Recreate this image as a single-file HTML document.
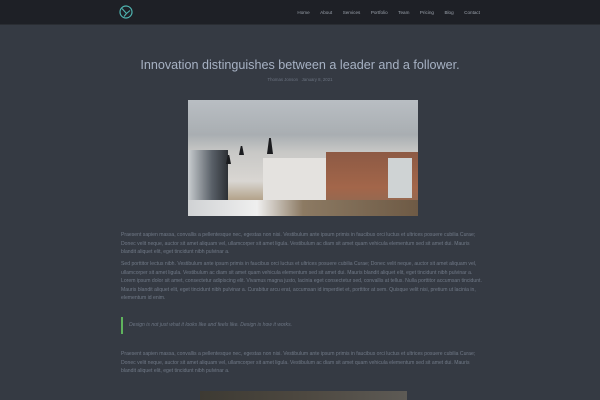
<!DOCTYPE html>
<html><head><meta charset="utf-8"><style>
*{margin:0;padding:0;box-sizing:border-box}
body{width:600px;height:400px;overflow:hidden;background:#353a43;font-family:"Liberation Sans",sans-serif}
.nav{height:25px;background:#1e2026;position:relative;border-bottom:1px solid #2a2d33}
.logo{position:absolute;left:119px;top:5px;width:14px;height:14px}
.menu{position:absolute;right:120px;top:10px;font-size:4.6px;color:#9aa1ab;display:flex;gap:10.5px}
h1{position:absolute;top:58px;left:0;width:600px;text-align:center;font-weight:normal;font-size:12.6px;color:#a7b2c4}
.meta{position:absolute;top:77px;width:600px;text-align:center;font-size:4.3px;color:#6b7380}
.img{position:absolute;left:188px;top:100px;width:230px;height:116px;overflow:hidden;
background:linear-gradient(180deg,#b9bec3 0%,#a9aeb2 30%,#c8c8c6 45%,#d9d6d2 70%,#b6a68f 85%,#8b7660 100%)}
.wall{position:absolute;left:75px;top:58px;width:80px;height:45px;background:#e4e2df}
.brick{position:absolute;left:138px;top:52px;width:92px;height:60px;background:linear-gradient(180deg,#8d5a44,#a3664a 60%,#8a6a55)}
.win{position:absolute;left:200px;top:58px;width:24px;height:40px;background:#cfd3d4}
.dark{position:absolute;left:0;top:50px;width:40px;height:60px;background:linear-gradient(90deg,#c9cdd0,#596068 60%,#2d3035)}
.floor{position:absolute;left:0;top:100px;width:230px;height:16px;background:linear-gradient(90deg,#d0d2d4 0%,#efefef 30%,#8c7a63 50%,#6e5a45 100%)}
.lamp{position:absolute;width:5px;height:9px;background:#1b1c1f;clip-path:polygon(35% 0,65% 0,100% 100%,0 100%)}
.p{position:absolute;left:121px;width:380px;font-size:5.1px;line-height:8.6px;color:#717a88;white-space:nowrap}
.q{position:absolute;left:121px;top:317px;height:17px;border-left:2px solid #5fb35d;padding-left:6px;font-size:5.1px;line-height:17px;color:#6d7684;font-style:italic}
.img2{position:absolute;left:200px;top:391px;width:207px;height:9px;background:linear-gradient(90deg,#3d3a33,#4d4840 50%,#5d5a55)}
</style></head><body>
<div class="nav">
<svg class="logo" viewBox="0 0 14 14"><circle cx="7" cy="7" r="6" fill="none" stroke="#4fb4b0" stroke-width="1.2"/><path d="M3 3.5L7.5 8.5L11 5.5M7.5 8.5L5 11.5" fill="none" stroke="#4fb4b0" stroke-width="1.1"/></svg>
<div class="menu"><span>Home</span><span>About</span><span>Services</span><span>Portfolio</span><span>Team</span><span>Pricing</span><span>Blog</span><span>Contact</span></div>
</div>
<h1>Innovation distinguishes between a leader and a follower.</h1>
<div class="meta">Thomas Jonson &nbsp; January 8, 2021</div>
<div class="img"><div class="dark"></div><div class="wall"></div><div class="brick"></div><div class="win"></div><div class="floor"></div>
<div class="lamp" style="left:79px;top:38px;width:6px;height:16px"></div><div class="lamp" style="left:51px;top:46px"></div><div class="lamp" style="left:38px;top:55px"></div></div>
<div class="p" style="top:231px">Praesent sapien massa, convallis a pellentesque nec, egestas non nisi. Vestibulum ante ipsum primis in faucibus orci luctus et ultrices posuere cubilia Curae;<br>Donec velit neque, auctor sit amet aliquam vel, ullamcorper sit amet ligula. Vestibulum ac diam sit amet quam vehicula elementum sed sit amet dui. Mauris<br>blandit aliquet elit, eget tincidunt nibh pulvinar a.</div>
<div class="p" style="top:260px">Sed porttitor lectus nibh. Vestibulum ante ipsum primis in faucibus orci luctus et ultrices posuere cubilia Curae; Donec velit neque, auctor sit amet aliquam vel,<br>ullamcorper sit amet ligula. Vestibulum ac diam sit amet quam vehicula elementum sed sit amet dui. Mauris blandit aliquet elit, eget tincidunt nibh pulvinar a.<br>Lorem ipsum dolor sit amet, consectetur adipiscing elit. Vivamus magna justo, lacinia eget consectetur sed, convallis at tellus. Nulla porttitor accumsan tincidunt.<br>Mauris blandit aliquet elit, eget tincidunt nibh pulvinar a. Curabitur arcu erat, accumsan id imperdiet et, porttitor at sem. Quisque velit nisi, pretium ut lacinia in,<br>elementum id enim.</div>
<div class="q">Design is not just what it looks like and feels like. Design is how it works.</div>
<div class="p" style="top:350px">Praesent sapien massa, convallis a pellentesque nec, egestas non nisi. Vestibulum ante ipsum primis in faucibus orci luctus et ultrices posuere cubilia Curae;<br>Donec velit neque, auctor sit amet aliquam vel, ullamcorper sit amet ligula. Vestibulum ac diam sit amet quam vehicula elementum sed sit amet dui. Mauris<br>blandit aliquet elit, eget tincidunt nibh pulvinar a.</div>
<div class="img2"></div>
</body></html>
